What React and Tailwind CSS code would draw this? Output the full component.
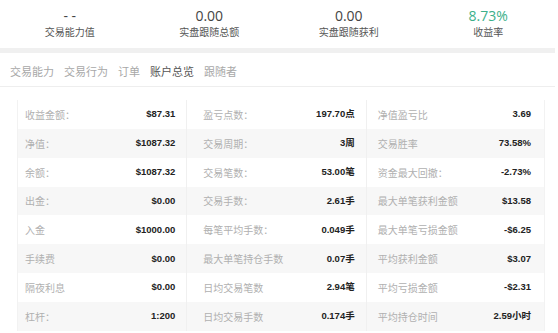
const stats = [
  { value: "- -", label: "交易能力值" },
  { value: "0.00", label: "实盘跟随总额" },
  { value: "0.00", label: "实盘跟随获利" },
  { value: "8.73%", label: "收益率", green: true },
]

const tabs = ["交易能力", "交易行为", "订单", "账户总览", "跟随者"]

const rows = [
  [["收益金额：", "$87.31"], ["盈亏点数：", "197.70点"], ["净值盈亏比", "3.69"]],
  [["净值：", "$1087.32"], ["交易周期：", "3周"], ["交易胜率", "73.58%"]],
  [["余额：", "$1087.32"], ["交易笔数：", "53.00笔"], ["资金最大回撤：", "-2.73%"]],
  [["出金：", "$0.00"], ["交易手数：", "2.61手"], ["最大单笔获利金额", "$13.58"]],
  [["入金", "$1000.00"], ["每笔平均手数：", "0.049手"], ["最大单笔亏损金额", "-$6.25"]],
  [["手续费", "$0.00"], ["最大单笔持仓手数", "0.07手"], ["平均获利金额", "$3.07"]],
  [["隔夜利息", "$0.00"], ["日均交易笔数", "2.94笔"], ["平均亏损金额", "-$2.31"]],
  [["杠杆：", "1:200"], ["日均交易手数", "0.174手"], ["平均持仓时间", "2.59小时"]],
]

const cols = [
  "w-[170px] pl-[7px] pr-[11px]",
  "w-[180px] pl-[16px] pr-[11px]",
  "w-[178px] pl-[11px] pr-[13px]",
]

export default function App() {
  return (
    <div className="w-[558px] h-[333px] overflow-hidden bg-white font-['Noto_Sans_CJK_SC',sans-serif]">
      <div className="grid grid-cols-4 pt-[7px] h-[48px]">
        {stats.map((s) => (
          <div key={s.label} className="flex flex-col items-center">
            <span className={`text-[14px] leading-[18px] font-['Open_Sans','Noto_Sans_CJK_SC',sans-serif] ${s.green ? "text-[#3cb08a]" : "text-[#444]"}`}>
              {s.value}
            </span>
            <span className="text-[10px] leading-[13px] text-[#555]">{s.label}</span>
          </div>
        ))}
      </div>
      <div className="h-[5px] w-[555px] bg-[#f0f0f0]" />
      <div className="flex gap-[10px] pl-[10px] pt-[3px] h-[34px] items-center border-b border-[#eeeeee] w-[555px]">
        {tabs.map((t) => (
          <span key={t} className={`text-[11px] ${t === "账户总览" ? "text-[#555]" : "text-[#a8a8a8]"}`}>
            {t}
          </span>
        ))}
      </div>
      <div className="ml-[17px] mt-[13px] w-[528px] border-l border-r border-[#f2f2f2]">
        {rows.map((r, i) => (
          <div key={i} className={`flex h-[28.85px] ${i % 2 ? "bg-[#f7f7f7]" : "bg-white"}`}>
            {r.map(([label, value], j) => (
              <div
                key={j}
                className={`${cols[j]} flex items-center justify-between ${j < 2 ? "border-r border-[#f0f0f0]" : ""}`}
              >
                <span className="text-[10px] text-[#b0b0b0]">{label}</span>
                <span className="text-[9.5px] font-bold text-[#222] font-['Liberation_Sans','Noto_Sans_CJK_SC',sans-serif]">
                  {value}
                </span>
              </div>
            ))}
          </div>
        ))}
      </div>
    </div>
  )
}
